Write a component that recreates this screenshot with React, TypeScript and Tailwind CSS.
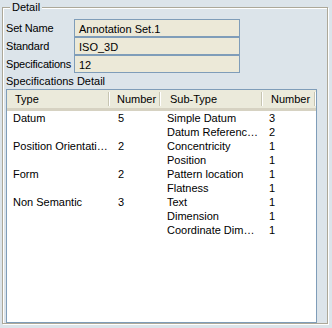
import React from 'react';

const fields = [
  { label: 'Set Name', value: 'Annotation Set.1' },
  { label: 'Standard', value: 'ISO_3D' },
  { label: 'Specifications', value: '12' },
];

// left columns only show a value every other row
const rows: [string, string, string, string][] = [
  ['Datum', '5', 'Simple Datum', '3'],
  ['', '', 'Datum Referenc…', '2'],
  ['Position Orientati…', '2', 'Concentricity', '1'],
  ['', '', 'Position', '1'],
  ['Form', '2', 'Pattern location', '1'],
  ['', '', 'Flatness', '1'],
  ['Non Semantic', '3', 'Text', '1'],
  ['', '', 'Dimension', '1'],
  ['', '', 'Coordinate Dim…', '1'],
];

const headers = [
  { text: 'Type', pad: 'pl-[8px]' },
  { text: 'Number', pad: 'pl-[7px]' },
  { text: 'Sub-Type', pad: 'pl-[9px]' },
  { text: 'Number', pad: 'pl-[8px]' },
];

const cellPad = ['pl-[6px]', 'pl-[8px]', 'pl-[6px]', 'pl-[6px]'];

export default function App() {
  return (
    <div
      className="w-[332px] h-[328px] bg-[#dce4ea] pt-[7px] pl-[2px] text-[11px] leading-[13px] text-black"
      style={{ fontFamily: '"Liberation Sans", Arial, sans-serif' }}
    >
      {/* Detail group box */}
      <div className="relative w-[326px] h-[317px] border border-[#aca899] shadow-[inset_1px_1px_0_#fff,1px_1px_0_#fff] pt-[11px] pl-[3px]">
        <span className="absolute left-[7px] top-[-7px] px-[2px] bg-[#dce4ea]">Detail</span>

        <div className="grid grid-cols-[68px_166px] auto-rows-[18px]">
          {fields.map((f) => (
            <React.Fragment key={f.label}>
              <div className="flex items-center tracking-[-0.2px]">{f.label}</div>
              <div className="flex items-center pl-[4px] pt-[2px] bg-[#ece9d8] border border-[#7f9db9]">
                {f.value}
              </div>
            </React.Fragment>
          ))}
        </div>

        <div className="h-[16px] flex items-center">Specifications Detail</div>

        {/* list view */}
        <div className="w-[311px] h-[234px] border border-[#7f9db9] bg-white">
          <div className="grid grid-cols-[103px_51px_102px_53px] h-[21px] bg-[#ebeadb] border-b-[3px] border-b-[#d6d2c2]">
            {headers.map((h, i) => (
              <div key={i} className={`flex items-center justify-between ${h.pad}`}>
                <span className="pt-[1px]">{h.text}</span>
                <span className="w-[2px] h-[14px] border-l border-l-[#c7c5b2] border-r border-r-white" />
              </div>
            ))}
          </div>
          <div className="grid grid-cols-[103px_51px_102px_53px] auto-rows-[14px]">
            {rows.map((r, ri) =>
              r.map((c, ci) => (
                <div key={`${ri}-${ci}`} className={`flex items-center whitespace-nowrap ${cellPad[ci]}`}>
                  {c}
                </div>
              ))
            )}
          </div>
        </div>
      </div>
    </div>
  );
}
